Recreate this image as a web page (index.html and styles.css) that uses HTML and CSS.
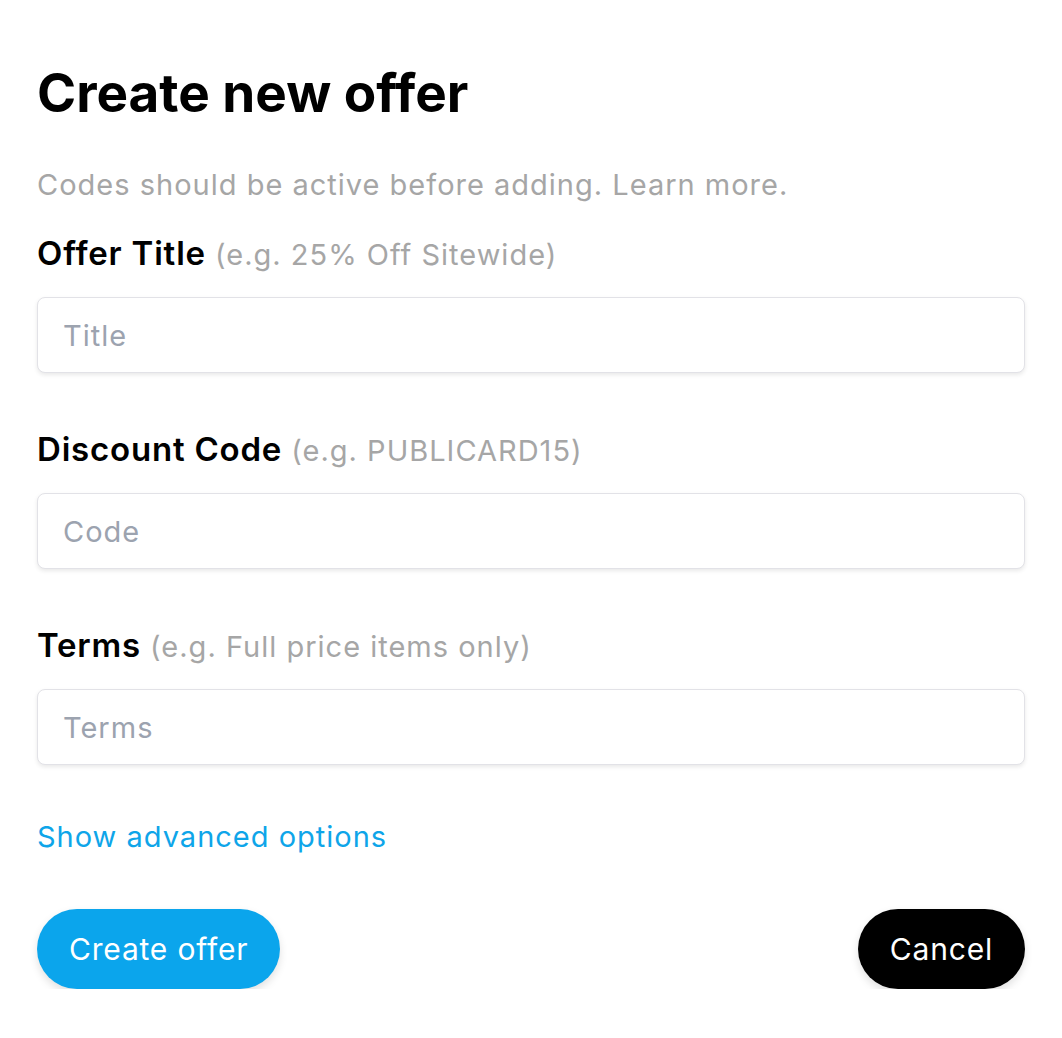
FILE: index.html
```html
<!DOCTYPE html>
<html lang="en">
<head>
    <meta charset="UTF-8">
    <meta name="viewport" content="width=device-width, initial-scale=1.0">
    <title>Create new offer</title>
    <link rel="stylesheet" href="styles.css">
</head>
<body>
    <div class="offer-form">
        <h1>Create new offer</h1>
        <p class="intro">Codes should be active before adding. Learn more.</p>
        <form id="offer-form">
            <div class="field">
                <label for="title">Offer Title <span class="hint">(e.g. 25% Off Sitewide)</span></label>
                <input type="text" id="title" placeholder="Title">
            </div>
            <div class="field">
                <label for="code">Discount Code <span class="hint">(e.g. PUBLICARD15)</span></label>
                <input type="text" id="code" placeholder="Code">
            </div>
            <div class="field">
                <label for="terms">Terms <span class="hint">(e.g. Full price items only)</span></label>
                <input type="text" id="terms" placeholder="Terms">
            </div>
            <a href="#" class="advanced">Show advanced options</a>
            <div class="actions">
                <button type="submit" class="btn btn-primary">Create offer</button>
                <button type="button" class="btn btn-dark">Cancel</button>
            </div>
        </form>
    </div>
</body>
</html>
```
FILE: styles.css
```css
body {
    font-family: Inter, "Noto Sans", sans-serif;
    margin: 0;
    padding: 0 37px;
    background-color: #fff;
    color: #000;
}
.offer-form {
    padding-top: 58px;
}
.offer-form h1 {
    margin: 0;
    font-size: 53px;
    line-height: 70px;
    font-weight: 700;
}
.intro {
    margin: 39px 0 0;
    font-size: 29px;
    line-height: 36px;
    letter-spacing: 1px;
    color: #a6a6a6;
}
.field {
    display: flex;
    flex-direction: column;
    margin-top: 30px;
}
.field + .field {
    margin-top: 56px;
}
.field label {
    font-size: 33px;
    line-height: 40px;
    font-weight: 600;
    letter-spacing: 0.8px;
    margin-bottom: 22px;
}
.field .hint {
    font-weight: 400;
    font-size: 29px;
    letter-spacing: 1px;
    color: #a6a6a6;
}
.field input {
    height: 76px;
    box-sizing: border-box;
    padding: 0 25px;
    font-family: inherit;
    font-size: 29px;
    letter-spacing: 1px;
    border: 1.5px solid #e2e2e7;
    border-radius: 8px;
    box-shadow: 0 2px 4px rgba(0, 0, 0, 0.09);
    outline: none;
}
.field input::placeholder {
    color: #9ca3af;
}
.advanced {
    display: block;
    margin-top: 52px;
    font-size: 29px;
    line-height: 40px;
    letter-spacing: 1px;
    color: #0ea5e9;
    text-decoration: none;
}
.actions {
    display: flex;
    justify-content: space-between;
    margin-top: 52px;
}
.btn {
    height: 80px;
    padding: 0 32px;
    border: none;
    border-radius: 40px;
    font-family: inherit;
    font-size: 30px;
    letter-spacing: 0.8px;
    color: #fff;
    cursor: pointer;
    box-shadow: 0 4px 8px rgba(0, 0, 0, 0.12);
}
.btn-primary {
    background-color: #0ba5ec;
}
.btn-dark {
    background-color: #000;
}
```
